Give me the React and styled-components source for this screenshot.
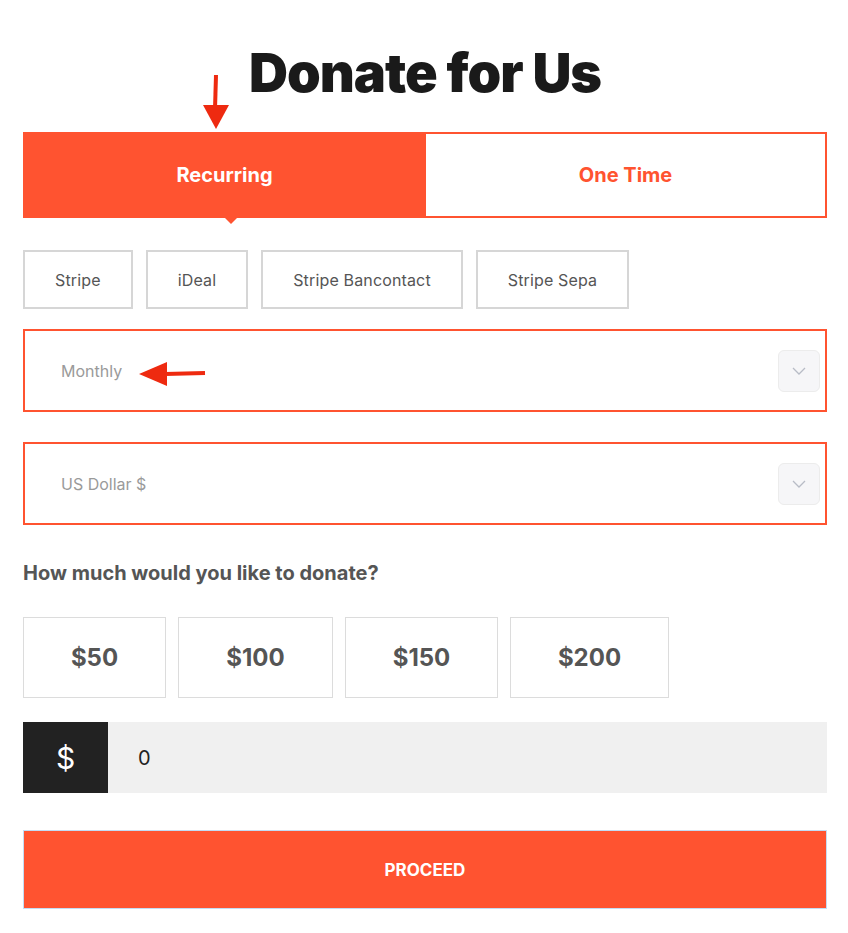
import React, { useState } from 'react';
import styled, { createGlobalStyle } from 'styled-components';

const ORANGE = '#FF5330';
const ARROW = '#EE2A10';

const GlobalStyle = createGlobalStyle`
  body {
    margin: 0;
    background: #fff;
    font-family: Inter, "Noto Sans", sans-serif;
  }
`;

const methods = ['Stripe', 'iDeal', 'Stripe Bancontact', 'Stripe Sepa'];
const amounts = [
  { label: '$50', width: 143 },
  { label: '$100', width: 155 },
  { label: '$150', width: 153 },
  { label: '$200', width: 159 },
];

function DownArrow() {
  return (
    <AnnotDown width="30" height="56" viewBox="0 0 30 56">
      <path d="M15 0 L14 34" stroke={ARROW} strokeWidth="4" fill="none" />
      <path d="M2 30 L28 30 L15 54 Z" fill={ARROW} />
    </AnnotDown>
  );
}

function LeftArrow() {
  return (
    <AnnotLeft width="68" height="26" viewBox="0 0 68 26">
      <path d="M26 13 L66 12" stroke={ARROW} strokeWidth="4" fill="none" />
      <path d="M0 13 L28 1 L28 25 Z" fill={ARROW} />
    </AnnotLeft>
  );
}

function Chevron() {
  return (
    <ChevronBox>
      <svg width="14" height="8" viewBox="0 0 14 8">
        <path d="M1 1 L7 7 L13 1" stroke="#b8bcc6" strokeWidth="1.3" fill="none" />
      </svg>
    </ChevronBox>
  );
}

export default function App() {
  const [tab, setTab] = useState('recurring');
  const [amount, setAmount] = useState('0');

  return (
    <Page>
      <GlobalStyle />
      <Title>Donate for Us</Title>
      <Tabs>
        <DownArrow />
        <Tab active={tab === 'recurring'} onClick={() => setTab('recurring')}>Recurring</Tab>
        <Tab active={tab === 'once'} onClick={() => setTab('once')}>One Time</Tab>
      </Tabs>

      <MethodRow>
        {methods.map((m) => (
          <MethodButton key={m}>{m}</MethodButton>
        ))}
      </MethodRow>

      <Select>
        <SelectText>Monthly</SelectText>
        <LeftArrow />
        <Chevron />
      </Select>

      <Select>
        <SelectText>US Dollar $</SelectText>
        <Chevron />
      </Select>

      <Question>How much would you like to donate?</Question>

      <AmountRow>
        {amounts.map((a) => (
          <AmountButton key={a.label} w={a.width} onClick={() => setAmount(a.label.slice(1))}>
            {a.label}
          </AmountButton>
        ))}
      </AmountRow>

      <InputRow>
        <Currency>$</Currency>
        <AmountInput value={amount} onChange={(e) => setAmount(e.target.value)} />
      </InputRow>

      <Proceed>PROCEED</Proceed>
    </Page>
  );
}

const Page = styled.div`
  width: 804px;
  padding: 38px 21px 24px 23px;
  display: flex;
  flex-direction: column;
`;

const Title = styled.h1`
  margin: 0 0 24px;
  text-align: center;
  font-family: Inter, sans-serif;
  font-weight: 900;
  font-size: 54px;
  line-height: 70px;
  letter-spacing: -1px;
  color: #1a1a1a;
`;

const Tabs = styled.div`
  display: flex;
  position: relative;
  height: 86px;
`;

const AnnotDown = styled.svg`
  position: absolute;
  left: 178px;
  top: -57px;
`;

const AnnotLeft = styled.svg`
  position: absolute;
  left: 114px;
  top: 30px;
`;

const Tab = styled.div`
  flex: 1;
  display: flex;
  align-items: center;
  justify-content: center;
  position: relative;
  cursor: pointer;
  font-size: 20px;
  font-weight: 700;
  color: ${(p) => (p.active ? '#fff' : ORANGE)};
  background: ${(p) => (p.active ? ORANGE : '#fff')};
  border: 2px solid ${ORANGE};
  ${(p) => !p.active && 'border-left: none;'}

  &::after {
    content: '';
    display: ${(p) => (p.active ? 'block' : 'none')};
    position: absolute;
    left: 200px;
    bottom: -8px;
    border-left: 6px solid transparent;
    border-right: 6px solid transparent;
    border-top: 6px solid ${ORANGE};
  }
`;

const MethodRow = styled.div`
  display: flex;
  gap: 13px;
  margin-top: 32px;
`;

const MethodButton = styled.div`
  height: 59px;
  box-sizing: border-box;
  padding: 0 30px;
  display: flex;
  align-items: center;
  border: 2px solid #d6d6d6;
  font-size: 16px;
  letter-spacing: 0.15px;
  color: #555;
  cursor: pointer;
`;

const Select = styled.div`
  position: relative;
  margin-top: 20px;
  height: 83px;
  box-sizing: border-box;
  border: 2px solid ${ORANGE};
  display: flex;
  align-items: center;
  justify-content: space-between;
  padding: 0 5px 0 36px;

  & + & {
    margin-top: 30px;
  }
`;

const SelectText = styled.span`
  font-size: 16px;
  color: #9a9a9a;
`;

const ChevronBox = styled.div`
  width: 40px;
  height: 40px;
  border: 1px solid #ececec;
  border-radius: 6px;
  background: #f6f6f8;
  display: flex;
  align-items: center;
  justify-content: center;
`;

const Question = styled.h3`
  margin: 34px 0 0;
  font-size: 20px;
  font-weight: 700;
  color: #555;
  line-height: 28px;
`;

const AmountRow = styled.div`
  display: flex;
  gap: 12px;
  margin-top: 30px;
`;

const AmountButton = styled.div`
  width: ${(p) => p.w}px;
  height: 81px;
  box-sizing: border-box;
  border: 1px solid #dcdcdc;
  display: flex;
  align-items: center;
  justify-content: center;
  font-size: 24px;
  font-weight: 700;
  color: #555;
  cursor: pointer;
`;

const InputRow = styled.div`
  display: flex;
  height: 71px;
  margin-top: 24px;
`;

const Currency = styled.div`
  width: 85px;
  background: #222;
  color: #fff;
  font-size: 30px;
  display: flex;
  align-items: center;
  justify-content: center;
`;

const AmountInput = styled.input`
  flex: 1;
  border: none;
  outline: none;
  background: #f0f0f0;
  padding: 0 30px;
  font-family: Inter, sans-serif;
  font-size: 20px;
  color: #222;
`;

const Proceed = styled.button`
  margin-top: 37px;
  height: 79px;
  background: ${ORANGE};
  border: 1px solid #c4dcf4;
  color: #fff;
  font-family: Inter, sans-serif;
  font-size: 17px;
  font-weight: 700;
  cursor: pointer;
`;
